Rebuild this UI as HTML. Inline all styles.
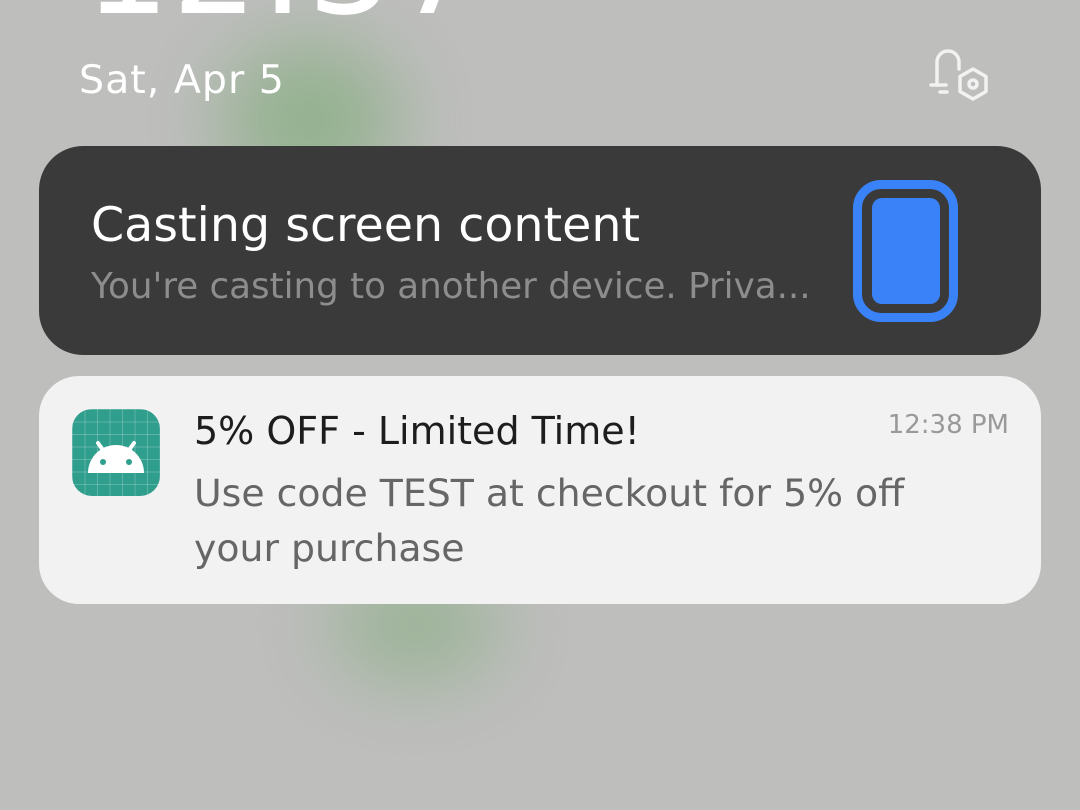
<!DOCTYPE html>
<html><head><meta charset="utf-8"><style>
html,body{margin:0;padding:0}
body{width:1080px;height:810px;overflow:hidden;position:relative;background:#bebebd;font-family:"DejaVu Sans","Liberation Sans",sans-serif}
.blob{position:absolute;border-radius:50%;filter:blur(40px)}
.clock{position:absolute;left:84px;top:-112px;font-size:135px;color:#fff;letter-spacing:2px}
.date{position:absolute;left:79px;top:57px;font-size:39.5px;color:#fff;letter-spacing:1px}
.dark{position:absolute;left:39px;top:146px;width:1002px;height:209px;background:#3a3a3a;border-radius:44px}
.t1{position:absolute;left:52px;top:52px;font-size:47.5px;color:#fff}
.t2{position:absolute;left:52px;top:120px;font-size:35.7px;color:#8d8d8d}
.cast{position:absolute;left:814px;top:34px;width:87px;height:124px;border:9px solid #3a82f7;border-radius:28px}
.cast i{position:absolute;left:10px;top:9px;width:68px;height:106px;background:#3a82f7;border-radius:10px}
.white{position:absolute;left:39px;top:376px;width:1002px;height:228px;background:#f2f2f2;border-radius:40px}
.icon{position:absolute;left:33px;top:33px;width:88px;height:87px;border-radius:20px;overflow:hidden;
background-image:linear-gradient(rgba(255,255,255,.22) 1px,transparent 1px),linear-gradient(90deg,rgba(255,255,255,.22) 1px,transparent 1px);background-size:12.5px 12.5px;background-color:#2f9e8c}
.h{position:absolute;left:155px;top:33px;font-size:38px;color:#1d1d1d}
.tm{position:absolute;right:32px;top:34px;font-size:26px;color:#999}
.b{position:absolute;left:155px;top:90px;font-size:37.8px;color:#666;line-height:55px}
</style></head><body>
<div class="blob" style="left:220px;top:40px;width:180px;height:160px;background:#8fb08a;opacity:.9"></div>
<div class="blob" style="left:330px;top:570px;width:170px;height:110px;background:#8fb08a;opacity:.8"></div>
<div class="clock">12:37</div>
<div class="date">Sat, Apr 5</div>
<svg style="position:absolute;left:928px;top:46px" width="64" height="60" viewBox="0 0 64 60" fill="none" stroke="#f2f2f2" stroke-width="3.5" stroke-linecap="round" stroke-linejoin="round">
<path d="M9 39 V16 A11 11 0 0 1 31 16 V23"/><path d="M3 39 H18"/><path d="M12 46 H19"/>
<path d="M45 23 L58 30.5 V45.5 L45 53 L32 45.5 V30.5 Z"/><circle cx="45" cy="38" r="4"/>
</svg>
<div class="dark">
<div class="t1">Casting screen content</div>
<div class="t2">You're casting to another device. Priva...</div>
<div class="cast"><i></i></div>
</div>
<div class="white">
<div class="icon"><svg width="88" height="87" viewBox="0 0 88 87"><path d="M16 64 A28 28 0 0 1 72 64 Z" fill="#fff"/><path d="M26 34 L33 44 M62 34 L55 44" stroke="#fff" stroke-width="4" stroke-linecap="round"/><circle cx="31" cy="53" r="3" fill="#2f9e8c"/><circle cx="57" cy="53" r="3" fill="#2f9e8c"/></svg></div>
<div class="h">5% OFF - Limited Time!</div>
<div class="tm">12:38 PM</div>
<div class="b">Use code TEST at checkout for 5% off<br>your purchase</div>
</div>
</body></html>
